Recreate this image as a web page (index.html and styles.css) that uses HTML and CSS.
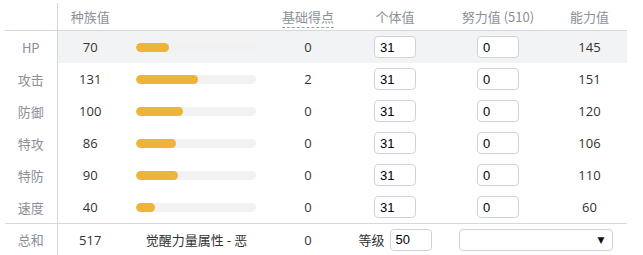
FILE: index.html
```html
<!DOCTYPE html>
<html>
<head>
<meta charset="utf-8">
<link rel="stylesheet" href="styles.css">
</head>
<body>
<table class="stats">
  <colgroup>
    <col class="c-label"><col class="c-base"><col class="c-bar"><col class="c-pts"><col class="c-iv"><col class="c-ev"><col class="c-val">
  </colgroup>
  <thead>
    <tr>
      <th></th>
      <th>种族值</th>
      <th></th>
      <th><span class="dashed">基础得点</span></th>
      <th>个体值</th>
      <th>努力值 (510)</th>
      <th>能力值</th>
    </tr>
  </thead>
  <tbody>
    <tr class="hl">
      <td class="label">HP</td><td>70</td>
      <td class="barcell"><div class="track"><div class="fill" style="width:33px"></div></div></td>
      <td>0</td><td><input class="num" value="31"></td><td><input class="num" value="0"></td><td>145</td>
    </tr>
    <tr>
      <td class="label">攻击</td><td>131</td>
      <td class="barcell"><div class="track"><div class="fill" style="width:62px"></div></div></td>
      <td>2</td><td><input class="num" value="31"></td><td><input class="num" value="0"></td><td>151</td>
    </tr>
    <tr>
      <td class="label">防御</td><td>100</td>
      <td class="barcell"><div class="track"><div class="fill" style="width:47px"></div></div></td>
      <td>0</td><td><input class="num" value="31"></td><td><input class="num" value="0"></td><td>120</td>
    </tr>
    <tr>
      <td class="label">特攻</td><td>86</td>
      <td class="barcell"><div class="track"><div class="fill" style="width:40px"></div></div></td>
      <td>0</td><td><input class="num" value="31"></td><td><input class="num" value="0"></td><td>106</td>
    </tr>
    <tr>
      <td class="label">特防</td><td>90</td>
      <td class="barcell"><div class="track"><div class="fill" style="width:42px"></div></div></td>
      <td>0</td><td><input class="num" value="31"></td><td><input class="num" value="0"></td><td>110</td>
    </tr>
    <tr class="last">
      <td class="label">速度</td><td>40</td>
      <td class="barcell"><div class="track"><div class="fill" style="width:19px"></div></div></td>
      <td>0</td><td><input class="num" value="31"></td><td><input class="num" value="0"></td><td>60</td>
    </tr>
  </tbody>
  <tfoot>
    <tr>
      <td class="label">总和</td><td>517</td>
      <td class="hidden">觉醒力量属性 - 恶</td>
      <td>0</td>
      <td><div class="level"><span>等级</span><input class="num" value="50"></div></td>
      <td colspan="2"><div class="selwrap"><select class="sel"><option></option></select></div></td>
    </tr>
  </tfoot>
</table>
</body>
</html>
```

FILE: styles.css
```css
html, body {
  margin: 0;
  padding: 0;
  background: #fff;
}
body {
  padding: 3px 0 0 5px;
  font-family: "Open Sans", "Noto Sans CJK SC", sans-serif;
  font-size: 13px;
  color: #333;
}
.stats {
  border-collapse: collapse;
  table-layout: fixed;
  width: 622px;
}
.c-label { width: 52px; }
.c-base { width: 66px; }
.c-bar { width: 147px; }
.c-pts { width: 76px; }
.c-iv { width: 98px; }
.c-ev { width: 108px; }
.c-val { width: 75px; }

.stats th {
  height: 27px;
  padding: 0;
  font-weight: normal;
  color: #8a8f99;
  text-align: center;
  border-bottom: 1px solid #d3d7de;
  vertical-align: middle;
  font-family: "Noto Sans CJK SC", sans-serif;
}
.stats th:first-child,
.stats td:first-child {
  border-right: 1px solid #d3d7de;
}
.dashed {
  border-bottom: 1px dashed #9aa0aa;
  padding-bottom: 1px;
}
.stats td {
  height: 32px;
  padding: 0;
  text-align: center;
  vertical-align: middle;
}
.stats tr.hl td { background: #f2f3f5; }
.stats tr.hl td.label { background: #fff; }
.stats td.label {
  color: #8a8f99;
  font-family: "Noto Sans CJK SC", sans-serif;
}
.stats tr.last td { border-bottom: 1px solid #d3d7de; }
.stats tfoot td { height: 31px; }
.barcell { text-align: left !important; }
.track {
  margin-left: 13px;
  width: 120px;
  height: 9px;
  border-radius: 5px;
  background: #f2f2f2;
  overflow: hidden;
}
.fill {
  height: 9px;
  border-radius: 5px;
  background: #efb33b;
}
.num {
  box-sizing: border-box;
  width: 42px;
  height: 22px;
  margin: 0;
  padding: 0 5px;
  border: 1px solid #cfd3d9;
  border-radius: 4px;
  font-family: "Liberation Sans", sans-serif;
  font-size: 13px;
  color: #000;
  background: #fff;
  vertical-align: middle;
  outline: none;
}
.hidden {
  font-family: "Noto Sans CJK SC", sans-serif;
  color: #333;
}
.level {
  display: flex;
  align-items: center;
  justify-content: center;
  gap: 5px;
  font-family: "Noto Sans CJK SC", sans-serif;
}
.selwrap {
  position: relative;
  width: 154px;
  height: 22px;
  margin: 0 auto;
}
.sel {
  appearance: none;
  -webkit-appearance: none;
  box-sizing: border-box;
  width: 154px;
  height: 22px;
  border: 1px solid #cfd3d9;
  border-radius: 4px;
  background: #fff;
  margin: 0;
}
.selwrap::after {
  content: "▼";
  position: absolute;
  right: 8px;
  top: 5px;
  font-size: 9px;
  line-height: 12px;
  color: #111;
  font-family: "DejaVu Sans", sans-serif;
}
```
